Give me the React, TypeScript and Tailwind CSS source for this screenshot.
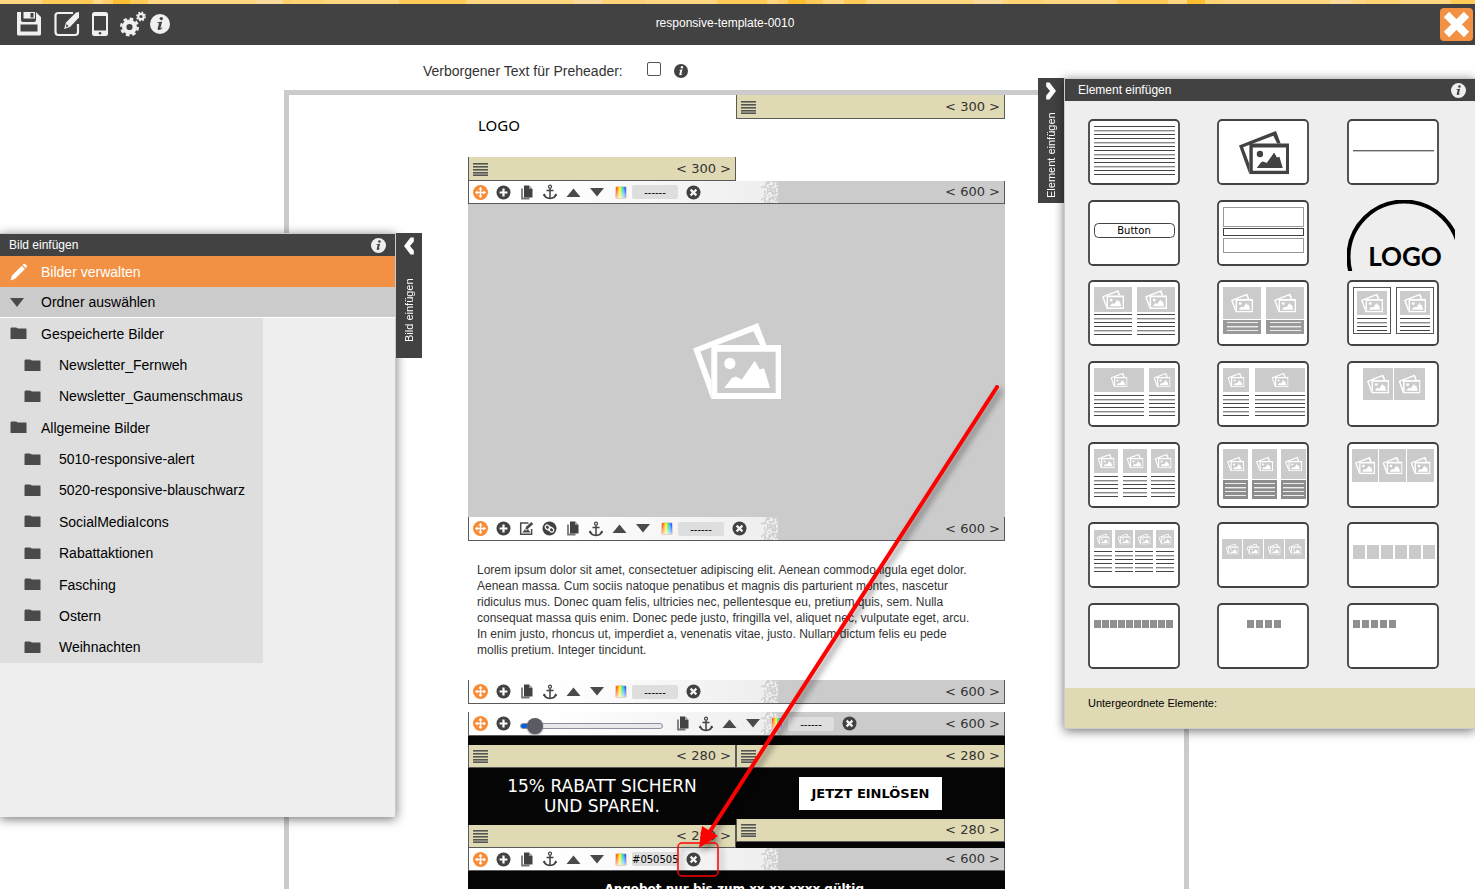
import type { ReactNode } from "react";

type Tool = "move" | "plus" | "edit" | "link" | "slider" | "copy" | "anchor" | "up" | "down" | "color" | "field" | "close";

const TOOL_LABELS: Record<Tool, string> = {
  move: "Verschieben",
  plus: "Hinzufügen",
  edit: "Bild bearbeiten",
  link: "Verlinken",
  slider: "Höhe",
  copy: "Kopieren",
  anchor: "Anker",
  up: "Nach oben",
  down: "Nach unten",
  color: "Farbe wählen",
  field: "Hintergrundfarbe",
  close: "Entfernen",
};

const BASE_TOOLS: Tool[] = ["move", "plus", "copy", "anchor", "up", "down", "color", "field", "close"];
const IMAGE_TOOLS: Tool[] = ["move", "plus", "edit", "link", "copy", "anchor", "up", "down", "color", "field", "close"];
const SPACER_TOOLS: Tool[] = ["move", "plus", "slider", "copy", "anchor", "up", "down", "color", "field", "close"];

const FOLDERS = [
  { name: "Gespeicherte Bilder", root: true },
  { name: "Newsletter_Fernweh" },
  { name: "Newsletter_Gaumenschmaus" },
  { name: "Allgemeine Bilder", root: true },
  { name: "5010-responsive-alert" },
  { name: "5020-responsive-blauschwarz" },
  { name: "SocialMediaIcons" },
  { name: "Rabattaktionen" },
  { name: "Fasching" },
  { name: "Ostern" },
  { name: "Weihnachten" },
];

// [start, width, color]
const STRIPES: [number, number, string][] = [
  [42, 51, "#ffca57"],
  [93, 10, "#ffd98a"],
  [103, 10, "#ffcf6a"],
  [113, 17, "#ffbe30"],
  [130, 18, "#ffca57"],
  [256, 27, "#fbdb9b"],
  [283, 9, "#ffcf6a"],
  [292, 33, "#ffd273"],
  [399, 67, "#ffca57"],
  [574, 28, "#fbdb9b"],
  [602, 44, "#ffd27a"],
  [717, 50, "#ffca57"],
  [778, 10, "#ffcf6a"],
  [788, 18, "#ffbe30"],
  [806, 17, "#ffca57"],
  [844, 22, "#ffca57"],
  [974, 28, "#fbdb9b"],
  [1008, 36, "#ffd273"],
  [1117, 51, "#ffca57"],
  [1187, 18, "#ffbe30"],
  [1205, 18, "#ffd273"],
  [1330, 22, "#fbdb9b"],
  [1366, 34, "#ffd273"],
  [1451, 24, "#ffca57"],
];

function PhotosShape() {
  return (
    <>
      <path d="M38 115 L234 38 L259 104 H240 L220 63 L60 124 L93 213 V267 Z" />
      <path fillRule="evenodd" d="M93 104H303V267H93Z M111 125V249H287V125Z" />
      <circle cx="149" cy="160" r="17" />
      <path d="M132 234 L155 204 L167 199 L185 208 L224 152 L239 178 L252 174 L270 234 Z" />
    </>
  );
}

function Photos({ x, y, w }: { x: number; y: number; w: number }) {
  return (
    <svg x={x} y={y} width={w} height={w * 0.865} viewBox="38 38 265 229" fill="currentColor">
      <PhotosShape />
    </svg>
  );
}

function InfoIcon({ className }: { className: string }) {
  return (
    <svg viewBox="0 0 20 20" className={className} aria-hidden="true">
      <circle cx="10" cy="10" r="10" fill="currentColor" />
      <g className="fill-[#424242]">
        <circle cx="11.3" cy="4.6" r="1.7" />
        <path d="M7 8.4 L12.2 7.6 L10.5 13.8 C10.3 14.7 10.9 14.6 12 13.6 L12.4 14.1 C10.6 16.4 7.2 16.9 7.7 14.3 L8.9 9.7 C9 9.1 8 9.1 7 9.1 Z" />
      </g>
    </svg>
  );
}

function InfoIconDark() {
  return (
    <svg viewBox="0 0 20 20" className="size-3.5" aria-hidden="true">
      <circle cx="10" cy="10" r="10" fill="#424242" />
      <g fill="#fff">
        <circle cx="11.3" cy="4.6" r="1.7" />
        <path d="M7 8.4 L12.2 7.6 L10.5 13.8 C10.3 14.7 10.9 14.6 12 13.6 L12.4 14.1 C10.6 16.4 7.2 16.9 7.7 14.3 L8.9 9.7 C9 9.1 8 9.1 7 9.1 Z" />
      </g>
    </svg>
  );
}

function ToolIcon({ tool }: { tool: Tool }) {
  switch (tool) {
    case "move":
      return (
        <svg viewBox="0 0 15 15" className="size-[15px]">
          <circle cx="7.5" cy="7.5" r="7.5" fill="#f98b35" />
          <path d="M7.5 3.5V11.5M3.5 7.5H11.5" stroke="#fff" strokeWidth="1.4" />
          <path d="M7.5 1.8L9.6 4.6H5.4ZM7.5 13.2L9.6 10.4H5.4ZM1.8 7.5L4.6 5.4V9.6ZM13.2 7.5L10.4 5.4V9.6Z" fill="#fff" />
        </svg>
      );
    case "plus":
      return (
        <svg viewBox="0 0 15 15" className="size-[15px]">
          <circle cx="7.5" cy="7.5" r="7" fill="#424242" />
          <path d="M7.5 3.6V11.4M3.6 7.5H11.4" stroke="#fff" strokeWidth="2.2" />
        </svg>
      );
    case "edit":
      return (
        <svg viewBox="0 0 15 15" className="size-[15px]">
          <path d="M9.5 2H1.7V13.2H12.6V8" fill="none" stroke="#4a4a4a" strokeWidth="1.5" />
          <path d="M3.5 11.5L5.5 8.5L7 9.8L9 8L11.3 11.5Z" fill="#4a4a4a" />
          <path d="M6.2 8.8L7 5.8L12.4 1L14.2 2.9L8.8 7.9Z" fill="#4a4a4a" />
        </svg>
      );
    case "link":
      return (
        <svg viewBox="0 0 15 15" className="size-[15px]">
          <circle cx="7.5" cy="7.5" r="7" fill="#424242" />
          <g fill="none" stroke="#fff" strokeWidth="1.2">
            <rect x="3" y="4.6" width="5.4" height="3.8" rx="1.9" transform="rotate(40 5.7 6.5)" />
            <rect x="6.6" y="6.8" width="5.4" height="3.8" rx="1.9" transform="rotate(40 9.3 8.7)" />
          </g>
        </svg>
      );
    case "copy":
      return (
        <svg viewBox="0 0 15 15" className="size-[15px]">
          <path d="M3 3.5V13.5H10.5" fill="none" stroke="#777" strokeWidth="1.8" />
          <path d="M5 0.5H10L13.5 4V12.5H5Z" fill="#424242" />
          <path d="M10 0.5L13.5 4H10Z" fill="#999" />
        </svg>
      );
    case "anchor":
      return (
        <svg viewBox="0 0 16 16" className="size-4" fill="none" stroke="#424242">
          <circle cx="8" cy="2.7" r="1.5" strokeWidth="1.2" />
          <path d="M8 4.2V14.5M4.5 6.5H11.5" strokeWidth="1.5" />
          <path d="M2 10.5C2.6 13 5 14.2 8 14.4C11 14.2 13.4 13 14 10.5" strokeWidth="1.5" />
          <path d="M0.8 12L2 9.2L4.2 11.4ZM15.2 12L14 9.2L11.8 11.4Z" fill="#424242" stroke="none" />
        </svg>
      );
    case "up":
      return (
        <svg viewBox="0 0 15 15" className="size-[15px]">
          <path d="M0.5 12L7.5 3.5L14.5 12Z" fill="#4a4a4a" />
        </svg>
      );
    case "down":
      return (
        <svg viewBox="0 0 16 15" className="h-[15px] w-4">
          <path d="M1 3H15L8 11.5Z" fill="#4a4a4a" />
        </svg>
      );
    case "color":
      return <span className="mr-px ml-0.5 block h-[13px] w-3 rounded-xs border border-[#e9d0c0] bg-[linear-gradient(180deg,transparent_0%,rgba(255,255,255,0.7)_100%),linear-gradient(90deg,#f22_0%,#fa0_22%,#ff3_42%,#4e6_58%,#2bf_76%,#22f_100%)]" />;
    default:
      return (
        <svg viewBox="0 0 15 15" className="size-[15px]">
          <circle cx="7.5" cy="7.5" r="7" fill="#424242" />
          <path d="M4.6 4.6L10.4 10.4M10.4 4.6L4.6 10.4" stroke="#f4f4f4" strokeWidth="2.2" />
        </svg>
      );
  }
}

// speckled edge between the light and the grey part of a toolbar
function Speckle() {
  const dots: ReactNode[] = [];
  for (let row = 0; row < 16; row++) {
    for (let col = 0; col < 12; col++) {
      let seed = Math.imul(row * 131 + col * 17 + 7, 2654435761);
      seed = Math.imul(seed ^ (seed >>> 15), 2246822519);
      const noise = ((seed ^ (seed >>> 13)) >>> 0) % 100;
      if (noise < 22 + col * 4) dots.push(<rect key={`${row}-${col}`} x={col * 1.5} y={row * 1.5} width="1.5" height="1.5" />);
    }
  }
  return (
    <svg className="absolute top-0 left-[54.6%] h-full w-[18px] fill-[#cbcbcb]" viewBox="0 0 18 24" preserveAspectRatio="none" aria-hidden="true">
      {dots}
    </svg>
  );
}

function Toolbar({ tools, color = "------", short = false }: { tools: Tool[]; color?: string; short?: boolean }) {
  return (
    <div
      className={`${
        short ? "h-[23px]" : "h-6"
      } relative flex items-center border border-t-0 border-[#5a5a5a] bg-[linear-gradient(90deg,#fff_0%,#fff_15%,#efefef_54%,#efefef_57.8%,#cbcbcb_57.8%)] pr-1 pl-1`}
    >
      <Speckle />
      <div className="relative flex flex-1 items-center gap-2">
        {tools.map((tool) => {
          if (tool === "slider") {
            return (
              <input
                key={tool}
                type="range"
                aria-label={TOOL_LABELS[tool]}
                defaultValue={5}
                className="mt-1 mr-1 ml-px h-1.5 w-[143px] appearance-none rounded-full border border-[#8f8f9d] bg-[linear-gradient(90deg,#0060df_0%,#0060df_8%,#e9e9ed_8%)] [&::-webkit-slider-thumb]:size-4 [&::-webkit-slider-thumb]:appearance-none [&::-webkit-slider-thumb]:rounded-full [&::-webkit-slider-thumb]:bg-[#5b5b66] [&::-webkit-slider-thumb]:shadow-[0_1px_2px_#888]"
              />
            );
          }
          if (tool === "field") {
            return (
              <input
                key={tool}
                type="text"
                aria-label={TOOL_LABELS[tool]}
                defaultValue={color}
                className="-ml-1 h-3.5 w-[46px] rounded-xs bg-[#dedede] pt-px text-center font-['DejaVu_Sans',sans-serif] text-[10px] text-black"
              />
            );
          }
          return (
            <button key={tool} type="button" aria-label={TOOL_LABELS[tool]} className="flex items-center justify-center">
              <ToolIcon tool={tool} />
            </button>
          );
        })}
      </div>
      <Size value={600} />
    </div>
  );
}

function Size({ value }: { value: number }) {
  return <span className="relative font-['DejaVu_Sans',sans-serif] text-[13px] leading-4 whitespace-nowrap text-[#333]">&lt; {value} &gt;</span>;
}

function ColumnBar({ value, short = false }: { value: number; short?: boolean }) {
  return (
    <div className={`${short ? "h-[23px]" : "h-6"} flex items-center justify-between border border-t-0 border-[#5a5a5a] bg-[#dfd9b4] px-1`}>
      <button type="button" aria-label="Spalte verschieben">
        <svg viewBox="0 0 15 14" className="h-3.5 w-[15px]" fill="#555">
          <rect y="1" width="15" height="1.6" />
          <rect y="4" width="15" height="1.6" />
          <rect y="7" width="15" height="1.6" />
          <rect y="10" width="15" height="1.6" />
          <rect y="12.4" width="15" height="1.6" />
        </svg>
      </button>
      <Size value={value} />
    </div>
  );
}

function Lines({ x, y, w, n, light = false }: { x: number; y: number; w: number; n: number; light?: boolean }) {
  return (
    <>
      {Array.from({ length: n }, (_, i) => (
        <rect key={i} x={x} y={y + i * 4} width={w} height={i % 3 === 1 ? 1.4 : 1} fill={light ? "#eee" : i % 3 === 1 ? "#8a8a8a" : "#444"} />
      ))}
    </>
  );
}

function Pic({ x, y = 7, w, h, icon }: { x: number; y?: number; w: number; h: number; icon: number }) {
  return (
    <g color="#fff">
      <rect x={x} y={y} width={w} height={h} fill="#cbcbcb" />
      <Photos x={x + (w - icon) / 2} y={y + (h - icon * 0.865) / 2} w={icon} />
    </g>
  );
}

function Squares({ x, y, n, step, w, h, fill }: { x: number; y: number; n: number; step: number; w: number; h: number; fill: string }) {
  return (
    <>
      {Array.from({ length: n }, (_, i) => (
        <rect key={i} x={x + i * step} y={y} width={w} height={h} fill={fill} />
      ))}
    </>
  );
}

const ELEMENTS: { name: string; art: ReactNode }[] = [
  { name: "Text", art: <Lines x={6} y={7} w={81} n={13} /> },
  { name: "Bild", art: <g color="#424242"><Photos x={22} y={12} w={50} /></g> },
  { name: "Trennlinie", art: <rect x="6" y="31" width="81" height="1.4" fill="#666" /> },
  {
    name: "Button",
    art: (
      <>
        <rect x="6.5" y="23.5" width="80" height="14" rx="4" fill="#fff" stroke="#424242" />
        <text x="46" y="34" textAnchor="middle" className="font-['DejaVu_Sans',sans-serif] text-[10px]">Button</text>
      </>
    ),
  },
  {
    name: "Container",
    art: (
      <g fill="none">
        <rect x="6.5" y="7.5" width="80" height="19" stroke="#999" />
        <rect x="6.5" y="28.5" width="80" height="7" stroke="#424242" />
        <rect x="6.5" y="38.5" width="80" height="14" stroke="#999" />
      </g>
    ),
  },
  { name: "Logo", art: null },
  { name: "2 Bilder mit Text", art: [6, 49].map((x) => <g key={x}><Pic x={x} w={38} h={25} icon={22} /><Lines x={x} y={34} w={38} n={6} /></g>) },
  {
    name: "2 Bilder mit Textbox",
    art: [6, 49].map((x) => (
      <g key={x}>
        <Pic x={x} w={38} h={32} icon={22} />
        <rect x={x} y="40" width="38" height="14" fill="#999" />
        <Lines x={x + 4} y={42} w={31} n={3} light />
      </g>
    )),
  },
  {
    name: "2 Bilder mit Rahmen",
    art: [6, 49].map((x) => (
      <g key={x}>
        <rect x={x + 0.5} y="7.5" width="37" height="46" fill="none" stroke="#555" />
        <Pic x={x + 4} y={11} w={30} h={24} icon={22} />
        <Lines x={x + 4} y={38} w={30} n={4} />
      </g>
    )),
  },
  { name: "Bild breit, schmal", art: <><Pic x={6} w={50} h={24} icon={17} /><Pic x={61} w={26} h={24} icon={17} /><Lines x={6} y={34} w={50} n={6} /><Lines x={61} y={34} w={26} n={6} /></> },
  { name: "Bild schmal, breit", art: <><Pic x={6} w={26} h={24} icon={17} /><Pic x={38} w={50} h={24} icon={17} /><Lines x={6} y={34} w={26} n={6} /><Lines x={38} y={34} w={50} n={6} /></> },
  { name: "2 Bilder", art: <><Pic x={16} w={30} h={32} icon={22} /><Pic x={47} w={31} h={32} icon={22} /></> },
  { name: "3 Bilder mit Text", art: [6, 35, 63].map((x) => <g key={x}><Pic x={x} w={24} h={24} icon={17} /><Lines x={x} y={34} w={24} n={6} /></g>) },
  {
    name: "3 Bilder mit Textbox",
    art: [6, 35, 64].map((x) => (
      <g key={x}>
        <Pic x={x} w={25} h={30} icon={17} />
        <rect x={x} y="38" width="25" height="19" fill="#8d8d8d" />
        <Lines x={x + 2} y={41} w={21} n={4} light />
      </g>
    )),
  },
  { name: "3 Bilder", art: [5, 32, 60].map((x) => <Pic key={x} x={x} w={x === 5 ? 26 : 27} h={33} icon={20} />) },
  { name: "4 Bilder mit Text", art: [6, 27, 47, 68].map((x) => <g key={x}><Pic x={x} y={8} w={18} h={18} icon={13} /><Lines x={x} y={29} w={18} n={6} /></g>) },
  { name: "4 Bilder", art: [5, 26, 47, 68].map((x) => <Pic key={x} x={x} y={17} w={20} h={20} icon={13} />) },
  { name: "6 Bilder", art: <Squares x={6} y={23} n={6} step={14} w={12} h={14} fill="#cbcbcb" /> },
  { name: "10 Icons", art: <Squares x={6} y={17} n={10} step={8} w={7} h={8} fill="#8f8f8f" /> },
  { name: "4 Icons", art: <Squares x={30} y={17} n={4} step={9} w={7} h={8} fill="#8f8f8f" /> },
  { name: "5 Icons", art: <Squares x={6} y={17} n={5} step={9} w={7} h={8} fill="#8f8f8f" /> },
];

function Header() {
  return (
    <header>
      <svg viewBox="0 0 1475 4" preserveAspectRatio="none" className="block h-1 w-full bg-[#ffd780]" aria-hidden="true">
        {STRIPES.map(([x, w, color]) => (
          <rect key={x} x={x} width={w} height="4" fill={color} />
        ))}
      </svg>
      <div className="flex h-[41px] items-center bg-[#424242] pb-px text-[#f0f0f0]">
        <nav className="flex w-[170px] flex-none items-center pl-4">
          <button type="button" aria-label="Speichern" className="mr-3">
            <svg viewBox="0 0 26 26" className="block size-[26px]" fill="currentColor">
              <path fillRule="evenodd" d="M2 1H5V9C5 10 6 11 7 11H18C19 11 20 10 20 9V1L25 6V23C25 24 24 24.5 23 24.5H3C2 24.5 1 24 1 23V2C1 1 1 1 2 1ZM4.5 13.5V20.5H21.5V13.5Z" />
              <path d="M7.5 1H19V7.5H7.5ZM14.5 2V6.5H17.5V2Z" fillRule="evenodd" />
            </svg>
          </button>
          <button type="button" aria-label="Bearbeiten" className="mr-3">
            <svg viewBox="0 0 26 26" className="block size-[26px]">
              <path d="M19 2H4.5C2 2 1.5 3 1.5 4.5V21C1.5 23 2 24 4.5 24H21C23 24 24 23 24 21V13" fill="none" stroke="currentColor" strokeWidth="2.2" />
              <path d="M10 18L12 11.5L22 1.5L25 1V6.5L16 16Z" fill="currentColor" />
              <path d="M12.6 13L14.6 15.3L11.8 16.3Z" fill="#424242" />
            </svg>
          </button>
          <button type="button" aria-label="Mobile Ansicht" className="mr-3">
            <svg viewBox="0 0 16 24" className="block h-6 w-4">
              <rect width="16" height="24" rx="2.5" fill="currentColor" />
              <rect x="2" y="4" width="12" height="14.5" fill="#424242" />
              <circle cx="8" cy="21.3" r="1.3" fill="#424242" />
            </svg>
          </button>
          <button type="button" aria-label="Einstellungen" className="mr-1">
            <svg viewBox="0 0 26 26" className="block size-[26px]" fill="none" stroke="currentColor">
              <circle cx="9.5" cy="16" r="5.3" strokeWidth="4.4" />
              <circle cx="9.5" cy="16" r="8.3" strokeWidth="2.4" strokeDasharray="3.6 2.919" />
              <circle cx="21" cy="5.5" r="2.7" strokeWidth="2.2" />
              <circle cx="21" cy="5.5" r="4.2" strokeWidth="1.5" strokeDasharray="1.7 1.599" />
            </svg>
          </button>
          <button type="button" aria-label="Information">
            <InfoIcon className="block size-5" />
          </button>
        </nav>
        <h1 className="flex-1 pb-[3px] text-center text-xs leading-4 text-white">responsive-template-0010</h1>
        <div className="flex w-[195px] flex-none justify-end pr-0.5">
          <button type="button" aria-label="Schließen" className="flex size-[33px] items-center justify-center rounded-sm bg-[#f29144]">
            <svg viewBox="0 0 27 27" className="size-[27px]">
              <path d="M3.5 3.5L23.5 23.5M23.5 3.5L3.5 23.5" stroke="#fff" strokeWidth="7.5" />
            </svg>
          </button>
        </div>
      </div>
    </header>
  );
}

function Chevron({ left = false }: { left?: boolean }) {
  return (
    <svg viewBox="0 0 10 18" className="h-[18px] w-2.5 flex-none" fill="#fff" aria-hidden="true">
      <path d={left ? "M6.5 0.5H9.8V4.5L6 9L9.8 13.5V17.5H6.5L0 9Z" : "M0.2 0.5H3.5L10 9L3.5 17.5H0.2V13.5L4 9L0.2 4.5Z"} />
    </svg>
  );
}

function PanelTab({ label, left = false }: { label: string; left?: boolean }) {
  return (
    <button type="button" className="flex h-[125px] w-[26px] flex-none flex-col items-center bg-[#424242] pt-1 text-white">
      <Chevron left={left} />
      <span className="mt-2 flex flex-1 rotate-180 items-center text-[11px] leading-3 whitespace-nowrap [writing-mode:vertical-rl]">
        <span className="flex-1 text-center">{label}</span>
      </span>
    </button>
  );
}

function FolderIcon() {
  return (
    <svg viewBox="0 0 17 13" className="h-[13px] w-[17px] flex-none" fill="#4a4a4a" aria-hidden="true">
      <path d="M0.5 2C0.5 1 1 0.5 2 0.5H6C7 0.5 7 1.5 8 1.5H16C16.5 1.5 16.5 2 16.5 3V12H0.5Z" />
    </svg>
  );
}

function ImagePanel() {
  return (
    <aside className="absolute top-[188px] left-0 flex items-start">
      <section className="flex h-[584px] w-[396px] flex-col border-t border-r border-[#cbcbcb] bg-[#eee] shadow-[0_2px_10px_rgba(0,0,0,0.55)]">
        <h2 className="flex h-[22px] items-center justify-between bg-[#424242] pr-[9px] pl-[9px] text-xs text-white">
          Bild einfügen
          <InfoIcon className="size-[15px] text-[#eee]" />
        </h2>
        <a href="#bilder" className="flex h-[31px] items-center bg-[#f29144] pl-2.5 text-sm text-white">
          <svg viewBox="0 0 18 18" className="mr-[13px] size-[18px]" fill="#fff" aria-hidden="true">
            <path d="M0.5 17.5L2 12.5L11.8 2.7L15 5.9L5.2 15.8Z" />
            <path d="M12.6 1.9L13.7 0.8C14.7 0 17.8 3 17 4L15.9 5.1Z" />
          </svg>
          Bilder verwalten
        </a>
        <button type="button" className="flex h-[31px] items-center border-b border-white bg-[#cbcbcb] pl-2.5 text-sm text-black">
          <svg viewBox="0 0 14 9" className="mr-[17px] h-[9px] w-3.5" fill="#4a4a4a" aria-hidden="true">
            <path d="M0 0H14L7 9Z" />
          </svg>
          Ordner auswählen
        </button>
        <ul className="flex h-[345px] w-[263px] flex-col bg-[#dedede] text-sm text-black">
          {FOLDERS.map((folder) => (
            <li key={folder.name} className="flex flex-1">
              <a href="#ordner" className={`flex flex-1 items-center ${folder.root ? "gap-3.5 pl-2.5" : "gap-[18px] pl-6"}`}>
                <FolderIcon />
                {folder.name}
              </a>
            </li>
          ))}
        </ul>
      </section>
      <PanelTab label="Bild einfügen" left />
    </aside>
  );
}

function ElementPanel() {
  return (
    <aside className="absolute top-[33px] right-0 flex items-start">
      <PanelTab label="Element einfügen" />
      <section className="flex w-[411px] flex-col border-t border-l border-[#cbcbcb] bg-[#eee] shadow-[0_2px_10px_rgba(0,0,0,0.55)]">
        <h2 className="flex h-[22px] items-center justify-between bg-[#424242] pr-[9px] pl-[13px] text-xs text-white">
          Element einfügen
          <InfoIcon className="size-[15px] text-[#eee]" />
        </h2>
        <div className="grid h-[587px] grid-cols-3 content-between gap-x-[37px] pt-[18px] pr-9 pb-[19px] pl-[23px]">
          {ELEMENTS.map((element) => (
            <button key={element.name} type="button" aria-label={element.name} className="h-[66px]">
              {element.name === "Logo" ? (
                <svg viewBox="0 0 108 71" className="h-[71px] w-[108px]">
                  <circle cx="57" cy="57" r="55.5" fill="none" stroke="#000" strokeWidth="4" />
                  <text x="58" y="66" textAnchor="middle" className="font-['Lato',sans-serif] text-[26px] font-bold">LOGO</text>
                </svg>
              ) : (
                <svg viewBox="0 0 92 66" className="h-[66px] w-[92px]">
                  <rect x="1" y="1" width="90" height="64" rx="4" fill="#fff" stroke="#424242" strokeWidth="1.8" />
                  {element.art}
                </svg>
              )}
            </button>
          ))}
        </div>
        <footer className="h-[41px] border-b border-[#cbcbcb] bg-[#dfd9b4] pt-[7px] pl-[23px] text-[11px] leading-4 text-black">Untergeordnete Elemente:</footer>
      </section>
    </aside>
  );
}

// arrow and frame pointing at the remove button of the last toolbar
function Annotation() {
  return (
    <svg className="pointer-events-none absolute top-0 left-0 size-full overflow-visible drop-shadow-[3px_4px_3px_rgba(0,0,0,0.45)]" aria-hidden="true">
      <path d="M529 292L241 738" stroke="#f00" strokeWidth="4" strokeLinecap="round" />
      <path d="M231 753L234 731L250 741Z" fill="#f00" />
      <rect x="210" y="748" width="40" height="33" rx="4" fill="none" stroke="#f00" strokeWidth="1.5" />
    </svg>
  );
}

function Newsletter() {
  return (
    <div className="relative w-[537px]">
      <div className="grid grid-cols-[268fr_269fr] items-start">
        <div>
          <div className="flex h-[62px] items-center pb-0.5 pl-2.5 font-['Noto_Sans',sans-serif] text-[15px] text-black">LOGO</div>
          <ColumnBar value={300} />
        </div>
        <ColumnBar value={300} />
      </div>
      <Toolbar tools={BASE_TOOLS} short />
      <div className="flex h-[313px] items-center justify-center bg-[#cbcbcb] text-white">
        <svg viewBox="38 38 265 229" className="h-[76px] w-[88px]" fill="currentColor" aria-hidden="true">
          <PhotosShape />
        </svg>
      </div>
      <Toolbar tools={IMAGE_TOOLS} />
      <p className="h-[139px] pt-[21px] pr-8 pl-[9px] text-xs leading-4 text-[#333]">
        Lorem ipsum dolor sit amet, consectetuer adipiscing elit. Aenean commodo ligula eget dolor. Aenean massa. Cum sociis natoque penatibus et magnis dis parturient montes, nascetur ridiculus mus. Donec quam felis, ultricies nec, pellentesque eu, pretium quis, sem. Nulla consequat massa quis enim. Donec pede justo, fringilla vel, aliquet nec, vulputate eget, arcu. In enim justo, rhoncus ut, imperdiet a, venenatis vitae, justo. Nullam dictum felis eu pede mollis pretium. Integer tincidunt.
      </p>
      <Toolbar tools={BASE_TOOLS} />
      <div className="mt-2 bg-[#050505] font-['DejaVu_Sans',sans-serif] text-white">
        <Toolbar tools={SPACER_TOOLS} />
        <div className="mt-[9px] grid grid-cols-[268fr_269fr] items-start">
          <div>
            <ColumnBar value={280} short />
            <p className="h-[57px] pt-2 text-center text-[17px] leading-5">
              15% RABATT SICHERN
              <br />
              UND SPAREN.
            </p>
            <ColumnBar value={280} short />
          </div>
          <div>
            <ColumnBar value={280} short />
            <div className="flex h-[51px] items-start justify-center pt-[9px]">
              <a href="#einloesen" className="flex h-[33px] w-[143px] items-center justify-center bg-white text-[13px] font-bold whitespace-nowrap text-black">
                JETZT EINLÖSEN
              </a>
            </div>
            <ColumnBar value={280} short />
          </div>
        </div>
        <Toolbar tools={BASE_TOOLS} color="#050505" short />
        <p className="h-16 pt-2.5 text-center text-xs font-bold">Angebot nur bis zum xx.xx.xxxx gültig.</p>
      </div>
      <Annotation />
    </div>
  );
}

export default function App() {
  return (
    <div className="flex h-screen flex-col overflow-hidden bg-white font-['Liberation_Sans',Arial,sans-serif]">
      <Header />
      <main className="relative min-h-0 flex-1 overflow-hidden">
        <div className="pr-0.5">
          <div className="mx-auto w-[905px]">
            <div className="flex h-[45px] items-center pt-1.5 pl-[139px]">
              <label htmlFor="preheader" className="text-sm text-[#333]">Verborgener Text für Preheader:</label>
              <input
                id="preheader"
                type="checkbox"
                className="mr-[13px] mb-1 ml-6 size-3.5 appearance-none rounded-xs border border-[#555] bg-white checked:bg-[#424242]"
              />
              <InfoIconDark />
            </div>
            <div className="flex justify-center border-[5px] border-[#cbcbcb]">
              <Newsletter />
            </div>
          </div>
        </div>
        <ImagePanel />
        <ElementPanel />
      </main>
    </div>
  );
}
